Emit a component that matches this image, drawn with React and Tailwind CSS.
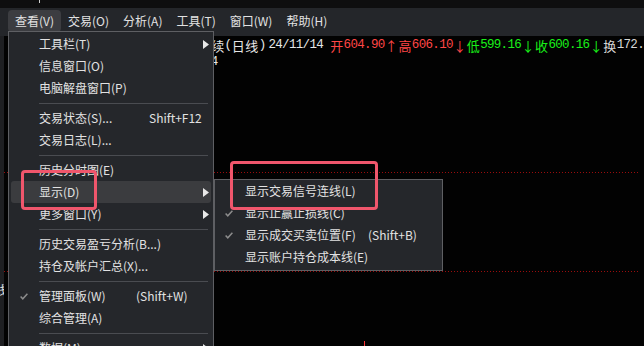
import React from "react";

const mainItems = [
  { t: "工具栏(T)", arrow: true },
  { t: "信息窗口(O)" },
  { t: "电脑解盘窗口(P)" },
  "sep",
  { t: "交易状态(S)...", sc: "Shift+F12", lw: "w-[110px]" },
  { t: "交易日志(L)..." },
  "sep",
  { t: "历史分时图(E)" },
  { t: "显示(D)", arrow: true, active: true },
  { t: "更多窗口(Y)", arrow: true },
  "sep",
  { t: "历史交易盈亏分析(B...)" },
  { t: "持仓及帐户汇总(X)..." },
  "sep",
  { t: "管理面板(W)", sc: "(Shift+W)", lw: "w-[97px]", check: true },
  { t: "综合管理(A)" },
  "sep",
  { t: "数据(M)", arrow: true },
];

const subItems = [
  { t: "显示交易信号连线(L)" },
  { t: "显示止赢止损线(C)", check: true },
  { t: "显示成交买卖位置(F)", sc: "(Shift+B)", lw: "w-[123px]", check: true },
  { t: "显示账户持仓成本线(E)" },
];

function Check() {
  return (
    <svg width="8" height="7" viewBox="0 0 8 7" className="block">
      <polyline points="0.6,3.4 2.8,5.8 7.4,0.8" fill="none" stroke="#8c8c8c" strokeWidth="1.5" />
    </svg>
  );
}

function Arrow() {
  return (
    <svg width="6" height="9" viewBox="0 0 6 9" className="block">
      <polygon points="0,0 6,4.5 0,9" fill="#e8e8e8" />
    </svg>
  );
}

function MenuRow({ item, lead }) {
  return (
    <div
      className={`flex items-center h-[22px] mx-[2px] rounded-[3px] ${
        item.active ? "bg-[#3b3c3f]" : ""
      }`}
    >
      <div className={`${lead} shrink-0 flex items-center`}>{item.check && <Check />}</div>
      <span className={`${item.lw || ""} shrink-0 whitespace-nowrap`}>{item.t}</span>
      {item.sc && <span className="whitespace-nowrap">{item.sc}</span>}
      <div className="flex-1" />
      {item.arrow && (
        <div className="pr-[2px]">
          <Arrow />
        </div>
      )}
    </div>
  );
}

function Sep() {
  return (
    <div className="h-[8px] flex items-center pl-[30px] pr-[5px]">
      <div className="h-px w-full bg-[#4a4c51]" />
    </div>
  );
}

function Cells({ s, color }) {
  return (
    <>
      {[...s].map((ch, i) =>
        ch.charCodeAt(0) > 0x2000 ? (
          <span
            key={i}
            className={`inline-block w-[13.66px] text-center text-[13px] font-['Noto_Sans_CJK_SC',sans-serif] ${color}`}
          >
            {ch}
          </span>
        ) : (
          <span key={i} className={`inline-block w-[6.83px] flex justify-center text-[12.5px] ${color}`}>
            {ch === " " ? "\u00a0" : ch}
          </span>
        )
      )}
    </>
  );
}

export default function App() {
  return (
    <div className="relative w-[644px] h-[346px] overflow-hidden bg-black flex flex-col font-['Noto_Sans_CJK_SC','Noto_Sans',sans-serif] text-[12px] text-[#e2e2e2]">
      <div className="h-[8px] bg-[#0e0e0f] pl-[39px]">
        <div className="w-px h-[3px] bg-[#d0d0d0]" />
      </div>

      <div className="h-[28px] bg-[#24262a] flex items-start pt-[2px] pl-[8px]">
        {["查看(V)", "交易(O)", "分析(A)", "工具(T)", "窗口(W)", "帮助(H)"].map((m, i) => (
          <div
            key={m}
            className={`h-[22px] px-[7px] flex items-center rounded-[4px] whitespace-nowrap ${
              i === 0 ? "bg-[#3c3d41]" : ""
            }`}
          >
            {m}
          </div>
        ))}
      </div>

      <div className="flex-1 flex">
        <div className="w-[8px] bg-[#1e1f22] overflow-hidden">
          <div className="mt-[247px] -ml-[5px] text-[12px] leading-[14px]">线</div>
        </div>
        <div className="relative flex-1 bg-[#020202] font-['Liberation_Mono','Noto_Sans_CJK_SC',monospace]">
          <svg className="absolute inset-0" width="636" height="310">
            <line x1="0" y1="136.5" x2="636" y2="136.5" stroke="#9a0c0c" strokeDasharray="1 2" />
            <line x1="0" y1="235.5" x2="636" y2="235.5" stroke="#9a0c0c" strokeDasharray="1 2" />
            <line x1="360.5" y1="305" x2="360.5" y2="310" stroke="#ff3333" />
          </svg>
          <div className="relative pl-[207px] pt-[1px]">
            <div className="h-[17px] flex items-center whitespace-nowrap">
              <Cells s="续(日线)" color="text-[#e6e6e6]" />
              <span className="w-[3px]" />
              <Cells s="24/11/14 " color="text-[#e6e6e6]" />
              <Cells s="开604.90↑高606.10↓" color="text-[#ff4646]" />
              <Cells s="低599.16↓收600.16↓" color="text-[#19f019]" />
              <Cells s="换172." color="text-[#d6d6d6]" />
            </div>
            <div className="h-[17px] flex items-center">
              <Cells s="4" color="text-[#e6e6e6]" />
            </div>
          </div>
        </div>
      </div>

      {/* main dropdown */}
      <div className="absolute left-[8px] top-[31px] w-[206px] h-[340px] bg-[#25272b] border border-[#5e5f63] pt-[1px]">
        {mainItems.map((it, i) =>
          it === "sep" ? <Sep key={i} /> : <MenuRow key={i} item={it} lead="w-[28px] pl-[9px]" />
        )}
      </div>

      {/* submenu */}
      <div className="absolute left-[214px] top-[179px] w-[229px] h-[92px] bg-[#25272b] border border-[#5e5f63]">
        {subItems.map((it, i) => (
          <MenuRow key={i} item={it} lead="w-[28px] pl-[8px]" />
        ))}
      </div>

      {/* annotation boxes */}
      <div className="absolute left-[21px] top-[170px] w-[76px] h-[40px] border-[3px] border-[#f0566c] rounded-[4px]" />
      <div className="absolute left-[230px] top-[161px] w-[148px] h-[49px] border-[3px] border-[#f0566c] rounded-[4px]" />
    </div>
  );
}
